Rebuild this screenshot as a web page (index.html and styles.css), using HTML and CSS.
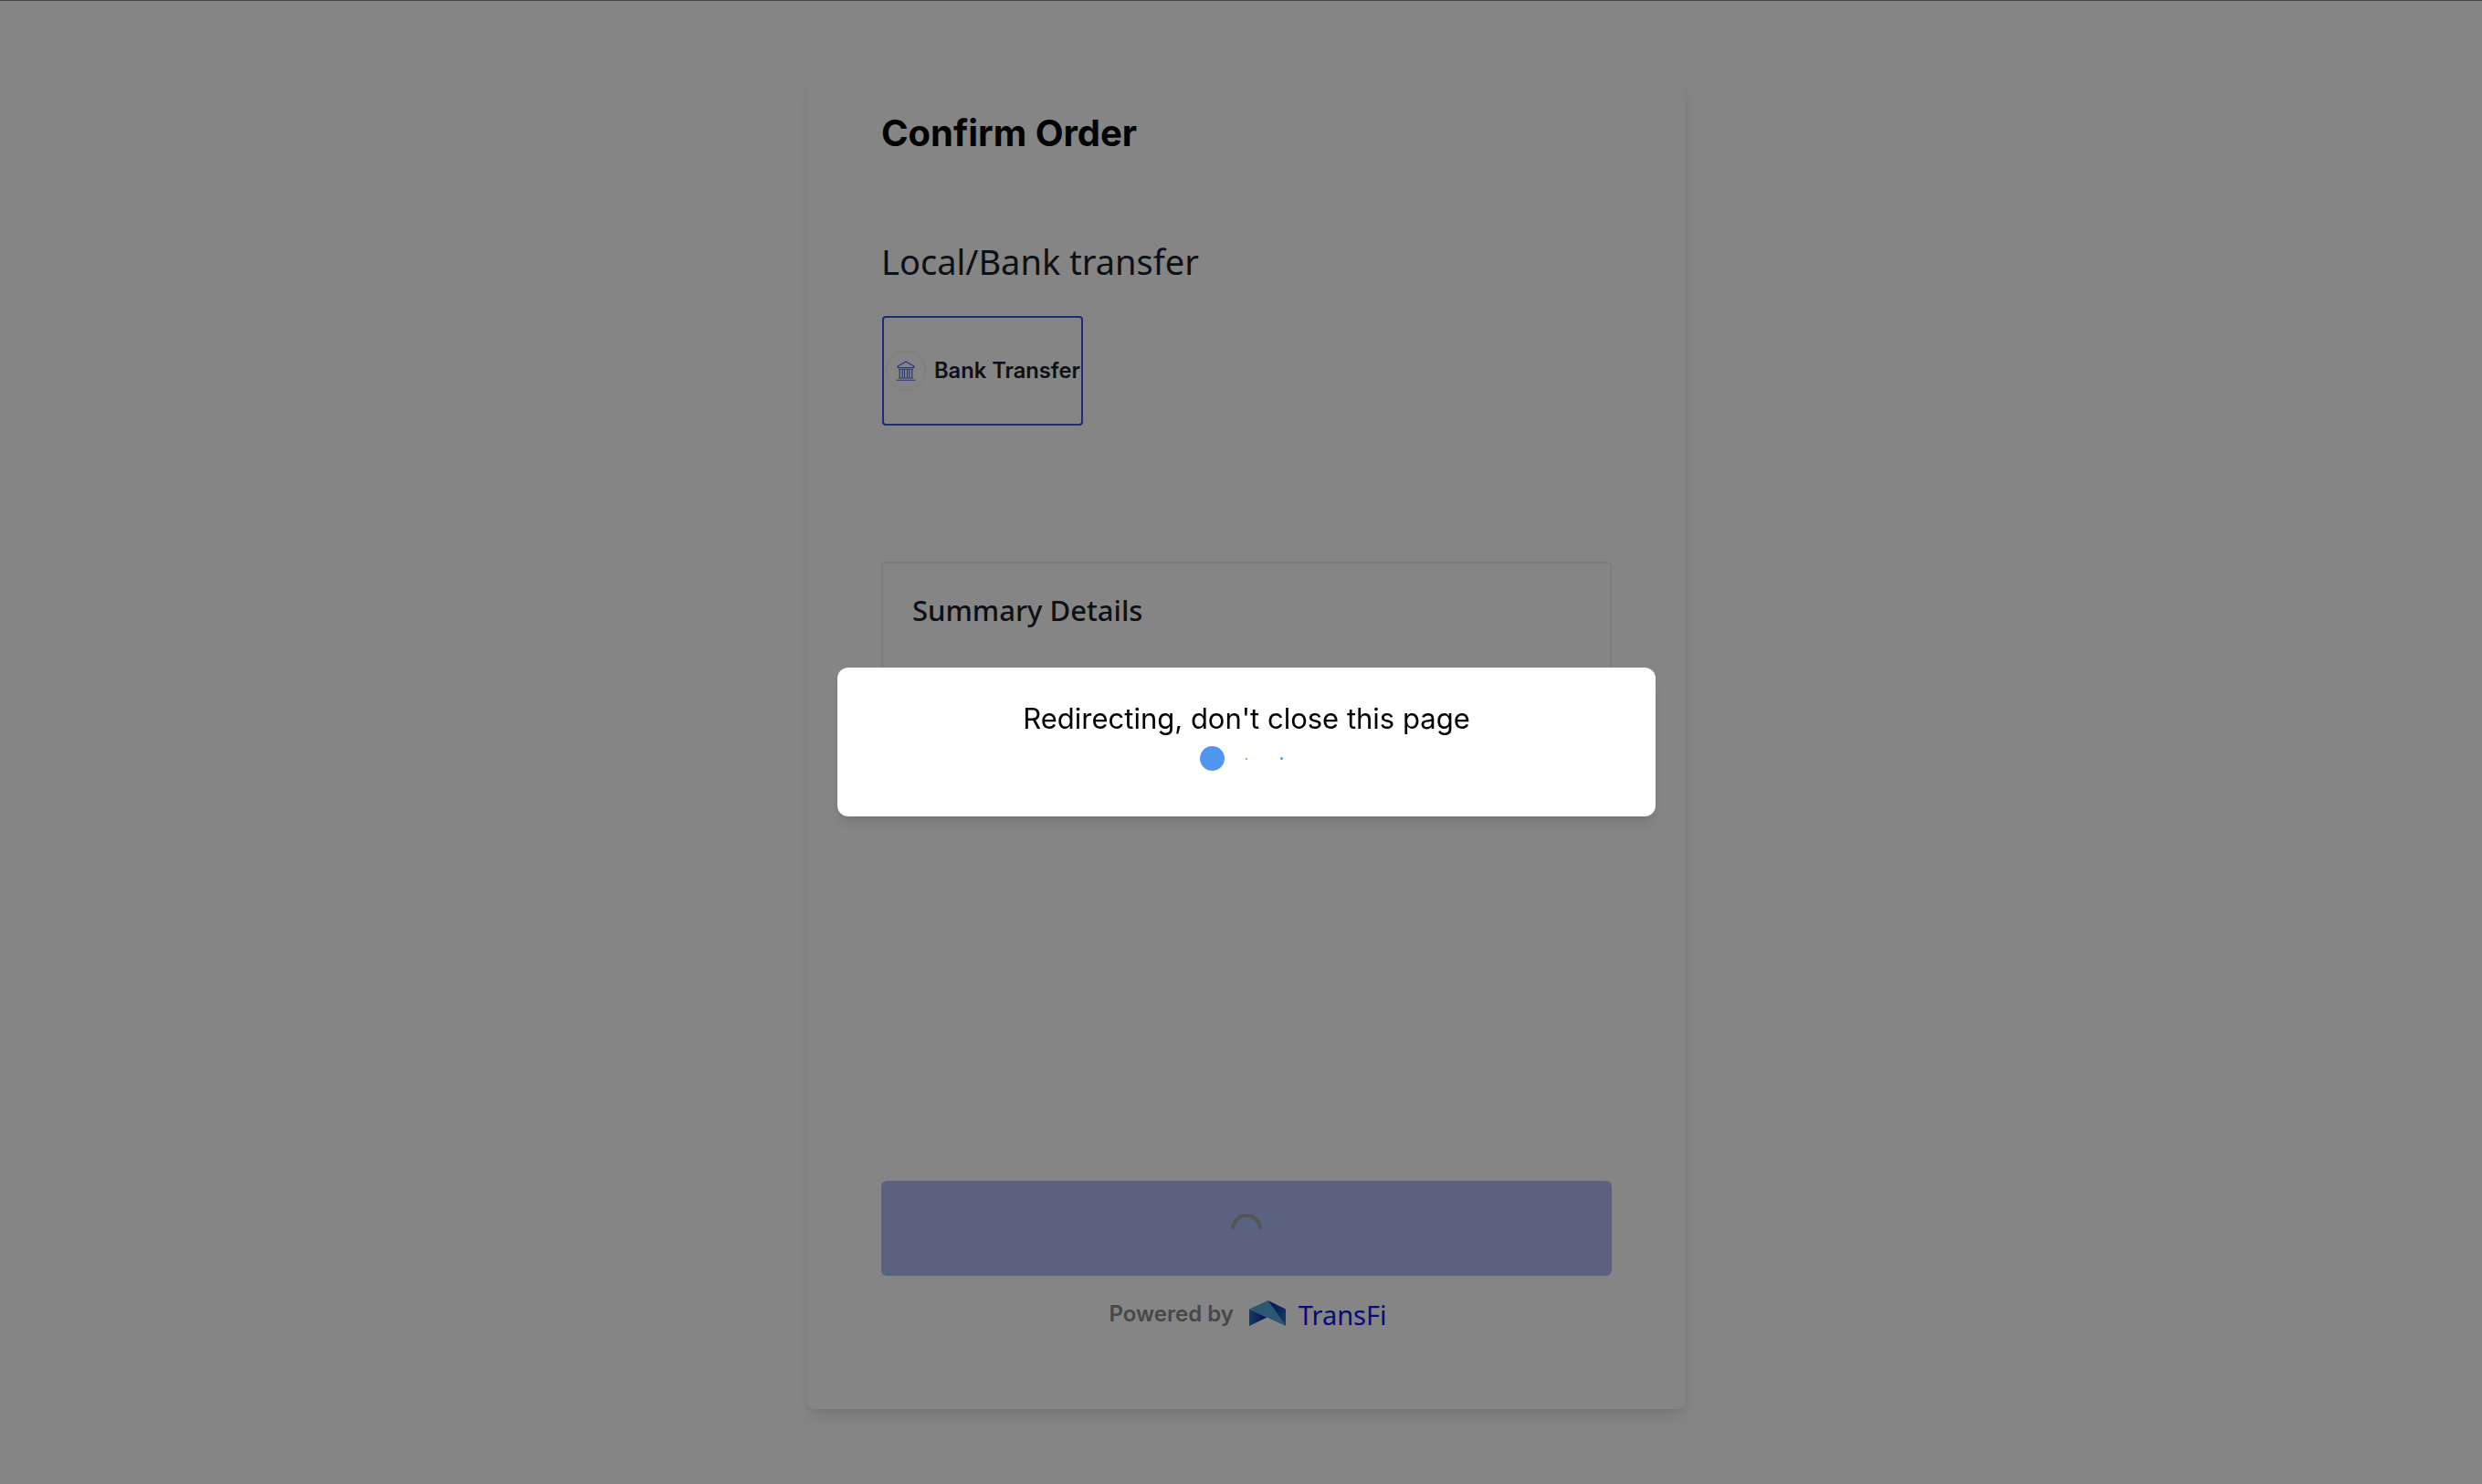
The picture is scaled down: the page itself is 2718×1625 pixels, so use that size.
FILE: index.html
```html
<!DOCTYPE html>
<html>
<head>
  <title>Confirm Order</title>
  <link rel="stylesheet" href="styles.css">
</head>
<body>
  <div class="card">
    <h1 class="title">Confirm Order</h1>
    <h2 class="method-title">Local/Bank transfer</h2>
    <div class="method">
      <div class="method-icon">
        <svg width="22" height="22" viewBox="0 0 22 22" fill="none" stroke="#4a63c8" stroke-width="1.1">
          <path d="M11 1 L20 6 V7.5 H2 V6 Z"/>
          <path d="M3 9.2 H19 M3 19 H19 M0.5 21.2 H21.5"/>
          <path d="M4.2 9.5 V18.5 M7.2 9.5 V18.5 M9.5 9.5 V18.5 M12.5 9.5 V18.5 M14.8 9.5 V18.5 M17.8 9.5 V18.5"/>
        </svg>
      </div>
      <span class="method-name">Bank Transfer</span>
    </div>
    <div class="summary">
      <h3 class="summary-title">Summary Details</h3>
    </div>
    <button class="submit">
      <svg width="36" height="36" viewBox="0 0 36 36" fill="none">
        <path d="M3 19 A15 15 0 0 1 33 19" stroke="#a3a3a3" stroke-width="4"/>
      </svg>
    </button>
    <div class="powered">
      <span class="powered-label">Powered by</span>
      <svg class="logo" width="41" height="28" viewBox="0 0 41 28">
        <defs>
          <linearGradient id="logoLeft" x1="0" y1="0" x2="1" y2="0">
            <stop offset="0" stop-color="#2a6fc0"/>
            <stop offset="1" stop-color="#0b1a9c"/>
          </linearGradient>
          <linearGradient id="logoRight" x1="0" y1="0" x2="1" y2="1">
            <stop offset="0" stop-color="#0b1a9c"/>
            <stop offset="1" stop-color="#2a7fc0"/>
          </linearGradient>
        </defs>
        <polygon points="0,9.5 0,28 19.5,18.5" fill="url(#logoLeft)"/>
        <polygon points="0,9.5 20.5,0 40,28 19.5,18.5" fill="#53a9d6"/>
        <polygon points="20.5,0 40,9.5 40,28" fill="url(#logoRight)"/>
      </svg>
      <span class="brand">TransFi</span>
    </div>
  </div>

  <div class="overlay">
    <div class="modal">
      <p class="modal-text">Redirecting, don't close this page</p>
      <div class="dots">
        <div class="dot-box"><span class="dot dot-big"></span></div>
        <div class="dot-box"><span class="dot dot-tiny"></span></div>
        <div class="dot-box"><span class="dot dot-small"></span></div>
      </div>
    </div>
  </div>
</body>
</html>
```

FILE: styles.css
```css
html, body {
  height: 100%;
}

body {
  margin: 0;
  padding-left: 12px;
  background-color: #ffffff;
  border-top: 1px solid #888888;
  box-sizing: border-box;
  font-family: Inter, "Noto Sans", sans-serif;
  overflow: hidden;
}

.card {
  width: 960px;
  height: 1458px;
  margin: 84px auto 0;
  padding: 34px 80px 0;
  box-sizing: border-box;
  background-color: #ffffff;
  border-radius: 6px;
  box-shadow: 0 10px 15px -3px rgba(0, 0, 0, 0.1), 0 4px 6px -2px rgba(0, 0, 0, 0.05);
  display: flex;
  flex-direction: column;
}

.title {
  margin: 0;
  font-size: 40px;
  line-height: 54px;
  font-weight: 700;
  color: #000000;
}

.method-title {
  margin: 88px 0 0;
  font-family: "Noto Sans", sans-serif;
  font-size: 38px;
  line-height: 50px;
  font-weight: 400;
  color: #1a202c;
}

.method {
  margin: 35px 0 0 1px;
  width: 220px;
  height: 120px;
  box-sizing: border-box;
  border: 2px solid #3458e0;
  border-radius: 4px;
  padding-left: 2px;
  display: flex;
  align-items: center;
  gap: 9px;
}

.method-icon {
  width: 42px;
  height: 42px;
  flex-shrink: 0;
  border: 1px solid #f0f0f0;
  border-radius: 50%;
  display: flex;
  align-items: center;
  justify-content: center;
}

.method-name {
  padding-bottom: 2px;
  font-size: 23.7px;
  font-weight: 600;
  color: #1a202c;
  white-space: nowrap;
}

.summary {
  margin-top: 149px;
  width: 800px;
  height: 200px;
  box-sizing: border-box;
  border: 2px solid #f0f0f0;
  border-radius: 4px;
  padding: 30px 32px;
}

.summary-title {
  margin: 0;
  font-family: "Noto Sans", sans-serif;
  font-size: 31px;
  line-height: 42px;
  font-weight: 500;
  color: #1a202c;
}

.submit {
  margin-top: auto;
  width: 800px;
  height: 104px;
  border: none;
  border-radius: 6px;
  background-color: #adbcf4;
  display: flex;
  align-items: center;
  justify-content: center;
  padding: 0;
}

.powered {
  margin: 26px 0 90px;
  height: 30px;
  padding-left: 3px;
  display: flex;
  align-items: center;
  justify-content: center;
}

.powered-label {
  font-size: 24px;
  font-weight: 600;
  color: #8a8a8a;
}

.logo {
  margin-left: 17px;
}

.brand {
  margin-left: 13px;
  padding-top: 2px;
  font-family: "Noto Sans", sans-serif;
  font-size: 29px;
  color: #1210ee;
}

.overlay {
  position: fixed;
  top: 0;
  left: 0;
  right: 0;
  bottom: 0;
  padding-left: 12px;
  background-color: rgba(0, 0, 0, 0.48);
  display: flex;
  align-items: center;
  justify-content: center;
}

.modal {
  width: 896px;
  height: 163px;
  padding-top: 33px;
  box-sizing: border-box;
  background-color: #ffffff;
  border-radius: 12px;
  box-shadow: 0 10px 15px -3px rgba(0, 0, 0, 0.1), 0 4px 6px -2px rgba(0, 0, 0, 0.05);
}

.modal-text {
  margin: 0;
  text-align: center;
  font-size: 31px;
  line-height: 46px;
  color: #000000;
}

.dots {
  margin-top: 7px;
  display: flex;
  justify-content: center;
  gap: 11px;
}

.dot-box {
  width: 27px;
  height: 27px;
  display: flex;
  align-items: center;
  justify-content: center;
}

.dot {
  display: block;
  border-radius: 50%;
  background-color: #5095ef;
}

.dot-big {
  width: 27px;
  height: 27px;
}

.dot-tiny {
  width: 2px;
  height: 2px;
}

.dot-small {
  width: 3px;
  height: 3px;
}
```
